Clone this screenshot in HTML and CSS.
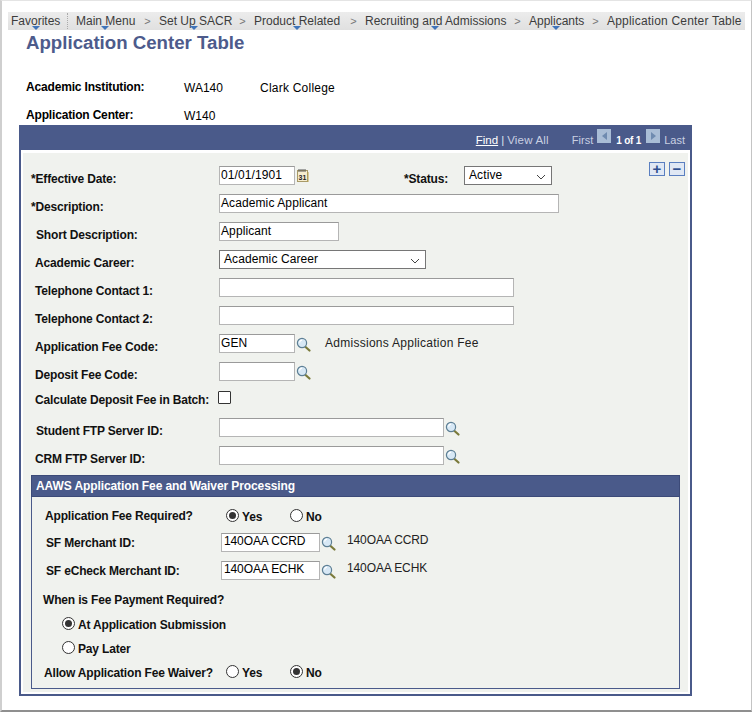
FILE: index.html
```html
<!DOCTYPE html>
<html lang="en">
<head>
<meta charset="utf-8">
<title>Application Center Table</title>
<link rel="stylesheet" href="styles.css">
</head>
<body>
<svg class="defs" width="0" height="0" aria-hidden="true">
  <defs>
    <symbol id="lookup" viewBox="0 0 15 15">
      <path d="M9 9.5 L13.5 13.5" stroke="#7a7a3a" stroke-width="2.2" stroke-linecap="round"/>
      <circle cx="6" cy="6" r="4.6" fill="#d7e8f5" stroke="#5d7f95" stroke-width="1.2"/>
      <path d="M3.5 5.5 A3 3 0 0 1 6 3.2" fill="none" stroke="#fff" stroke-width="1.2"/>
    </symbol>
    <symbol id="chev" viewBox="0 0 12 8">
      <path d="M2 2 L6 6 L10 2" fill="none" stroke="#444" stroke-width="1"/>
    </symbol>
  </defs>
</svg>
<div class="window">
  <nav class="crumbs">
    <span class="crumb fav">Favorites<i class="tri"></i></span>
    <span class="crumb-sep"></span>
    <span class="crumb w-main">Main Menu<i class="tri"></i></span>
    <span class="gt">&gt;</span>
    <span class="crumb w-setup">Set Up SACR<i class="tri"></i></span>
    <span class="gt">&gt;</span>
    <span class="crumb w-prod">Product Related<i class="tri"></i></span>
    <span class="gt">&gt;</span>
    <span class="crumb w-recr">Recruiting and Admissions<i class="tri"></i></span>
    <span class="gt">&gt;</span>
    <span class="crumb w-appl">Applicants<i class="tri"></i></span>
    <span class="gt">&gt;</span>
    <span class="crumb w-last">Application Center Table</span>
  </nav>

  <h1 class="title">Application Center Table</h1>

  <div class="keys">
    <div class="key-row"><span class="key-label">Academic Institution:</span><span class="key-val">WA140</span><span class="key-desc">Clark College</span></div>
    <div class="key-row"><span class="key-label">Application Center:</span><span class="key-val">W140</span></div>
  </div>

  <section class="panel">
    <header class="panel-head">
      <a class="find">Find</a><span class="bar">|</span><span class="nav-txt view-all">View All</span>
      <span class="nav-txt first">First</span>
      <span class="arrow a-prev"><i class="arr-l"></i></span>
      <b class="count">1 of 1</b>
      <span class="arrow a-next"><i class="arr-r"></i></span>
      <span class="nav-txt last">Last</span>
    </header>
    <div class="panel-body">
      <div class="addrem"><span class="sq">+</span><span class="sq">&minus;</span></div>

      <div class="row"><label class="lab req">*Effective Date:</label>
        <span class="in w76">01/01/1901</span>
        <svg class="cal" width="13" height="15" viewBox="0 0 13 15"><rect x="1.5" y="2.5" width="10" height="11" fill="#f6edcf" stroke="#a89a68"/><rect x="11.5" y="4" width="1" height="10" fill="#b9a24f"/><path d="M3 1v3M5 1v3M7 1v3M9 1v3" stroke="#555"/><text x="2.6" y="11.5" class="cal-t">31</text></svg>
        <label class="lab status">*Status:</label>
        <span class="sel w88">Active<svg class="chev"><use href="#chev"/></svg></span>
      </div>
      <div class="row"><label class="lab req">*Description:</label><span class="in w340">Academic Applicant</span></div>
      <div class="row"><label class="lab l5">Short Description:</label><span class="in w120">Applicant</span></div>
      <div class="row"><label class="lab l4">Academic Career:</label><span class="sel w207">Academic Career<svg class="chev"><use href="#chev"/></svg></span></div>
      <div class="row"><label class="lab l4">Telephone Contact 1:</label><span class="in w295"></span></div>
      <div class="row"><label class="lab l4">Telephone Contact 2:</label><span class="in w295"></span></div>
      <div class="row"><label class="lab l4">Application Fee Code:</label><span class="in w76">GEN</span><svg class="lk"><use href="#lookup"/></svg><span class="desc d-fee">Admissions Application Fee</span></div>
      <div class="row"><label class="lab l4">Deposit Fee Code:</label><span class="in w76"></span><svg class="lk"><use href="#lookup"/></svg></div>
      <div class="row"><label class="lab l4 batch">Calculate Deposit Fee in Batch:</label><span class="cb"></span></div>
      <div class="row"><label class="lab l5">Student FTP Server ID:</label><span class="in w225"></span><svg class="lk"><use href="#lookup"/></svg></div>
      <div class="row"><label class="lab l4">CRM FTP Server ID:</label><span class="in w225"></span><svg class="lk"><use href="#lookup"/></svg></div>

      <section class="sub">
        <h2 class="sub-head">AAWS Application Fee and Waiver Processing</h2>
        <div class="sub-body">
          <div class="row sr first-sr"><label class="lab s1">Application Fee Required?</label><span class="rad on"></span><span class="rl w-yes">Yes</span><span class="rad"></span><span class="rl">No</span></div>
          <div class="row sr"><label class="lab s2">SF Merchant ID:</label><span class="in w99">140OAA CCRD</span><svg class="lk"><use href="#lookup"/></svg><span class="desc d-m">140OAA CCRD</span></div>
          <div class="row sr"><label class="lab s2">SF eCheck Merchant ID:</label><span class="in w99">140OAA ECHK</span><svg class="lk"><use href="#lookup"/></svg><span class="desc d-m">140OAA ECHK</span></div>
          <div class="row sr"><label class="lab s3">When is Fee Payment Required?</label></div>
          <div class="row sr short"><span class="rad on ind"></span><span class="rl">At Application Submission</span></div>
          <div class="row sr short"><span class="rad ind"></span><span class="rl">Pay Later</span></div>
          <div class="row sr short"><label class="lab s4">Allow Application Fee Waiver?</label><span class="rad"></span><span class="rl w-yes">Yes</span><span class="rad on"></span><span class="rl">No</span></div>
        </div>
      </section>
    </div>
  </section>
</div>
</body>
</html>
```
FILE: styles.css
```css
* { box-sizing: border-box; }
html, body { margin: 0; padding: 0; background: #fff; }
body {
  width: 753px;
  height: 714px;
  overflow: hidden;
  font-family: "Liberation Sans", Arial, sans-serif;
  font-size: 12px;
  color: #000;
}
.defs { position: absolute; }
.window {
  width: 752px;
  height: 712px;
  background: #fff;
  border-top: 1px solid #e4e4e4;
  border-left: 2px solid #cfcfcf;
  border-right: 1px solid #c4c4c4;
  border-bottom: 2px solid #8f8f8f;
  padding: 11px 0 0 6px;
}

/* breadcrumb */
.crumbs {
  display: flex;
  align-items: center;
  width: 737px;
  height: 18px;
  background: linear-gradient(#ececec, #e0e0e0);
  color: #3c3c3c;
  font-size: 12px;
  padding-left: 3px;
  white-space: nowrap;
}
.crumb { position: relative; line-height: 18px; flex: none; }
.fav { width: 56px; }
.crumb-sep { width: 1px; height: 16px; margin-right: 8px; border-left: 1px dotted #aaa; flex: none; }
.gt { width: 23px; text-align: center; font-size: 11px; color: #777; flex: none; }
.w-main { width: 60px; }
.w-setup { width: 72px; }
.w-prod { width: 88px; }
.w-recr { width: 141px; }
.w-appl { width: 55px; }
.w-last { letter-spacing: 0.2px; }
.tri {
  position: absolute;
  left: 21px;
  bottom: 0;
  width: 0;
  height: 0;
  border-left: 4px solid transparent;
  border-right: 4px solid transparent;
  border-top: 4px solid #3f74ba;
}
.w-main .tri { left: 25px; }
.w-setup .tri { left: 31px; }
.w-prod .tri { left: 39px; }
.w-recr .tri { left: 66px; }
.w-appl .tri { left: 23px; }

.title {
  margin: 2px 0 0 18px;
  font-size: 18.67px;
  line-height: 21px;
  font-weight: bold;
  color: #4d5b8c;
}
.keys { margin: 27px 0 0 18px; }
.key-row { display: flex; height: 28px; align-items: flex-start; }
.key-label { width: 158px; font-weight: bold; line-height: 15px; letter-spacing: -0.17px; }
.key-val { width: 76px; line-height: 17px; }
.key-desc { line-height: 17px; letter-spacing: 0.23px; }

/* panel */
.panel {
  margin: -11px 0 0 11px;
  width: 673px;
  height: 571px;
  border: 2px solid #4a5a8a;
  border-top: 0;
  background: #fff;
}
.panel-head {
  height: 25px;
  margin: 0 -2px;
  background: #4a5a8a;
  display: flex;
  align-items: center;
  justify-content: flex-end;
  padding: 5px 7px 0 0;
  color: #c9d0e2;
  font-size: 11.5px;
}
.find { color: #fff; text-decoration: underline; }
.bar { color: #dfe3ee; margin: 0 3px; }
.view-all { letter-spacing: 0.2px; }
.first { margin-left: 23px; font-size: 11px; }
.last { font-size: 11px; }
.arrow {
  align-self: flex-start;
  width: 14px;
  height: 14px;
  background: #a9bdd6;
  margin-top: -1px;
  display: flex;
  align-items: center;
  justify-content: center;
}
.a-prev { margin-left: 4px; margin-right: 5px; }
.a-next { margin-left: 5px; margin-right: 4px; }
.arr-l { width: 0; height: 0; border-top: 4px solid transparent; border-bottom: 4px solid transparent; border-right: 5px solid #6f8bb0; }
.arr-r { width: 0; height: 0; border-top: 4px solid transparent; border-bottom: 4px solid transparent; border-left: 5px solid #6f8bb0; }
.count { color: #fff; font-size: 10px; width: 25px; white-space: nowrap; letter-spacing: -0.2px; }
.panel-body {
  position: relative;
  margin: 3px 2px 0 2px;
  height: 539px;
  background: #f0f2ee;
  padding: 13px 0 0 8px;
}
.addrem { position: absolute; top: 9px; right: 3px; display: flex; gap: 4px; }
.sq {
  width: 16px;
  height: 14px;
  border: 1px solid #5a7fc0;
  background: #e0e8f4;
  color: #2f4f8f;
  font-weight: bold;
  font-size: 15px;
  line-height: 11px;
  text-align: center;
}

.row { display: flex; align-items: flex-start; height: 28px; white-space: nowrap; }
.lab { width: 188px; font-weight: bold; color: #111; line-height: 15px; letter-spacing: -0.17px; padding-top: 6px; flex: none; }
.l5 { padding-left: 5px; }
.l4 { padding-left: 4px; }
.batch { margin-top: -3px; }
.status { width: 60px; margin-left: 95px; }
.in {
  display: block;
  height: 19px;
  background: #fff;
  border: 1px solid #b5b5b5;
  border-top-color: #9a9a9a;
  padding: 0 1px;
  line-height: 17px;
  letter-spacing: 0.1px;
  flex: none;
}
.w76 { width: 76px; }
.w340 { width: 340px; }
.w120 { width: 120px; }
.w295 { width: 295px; }
.w225 { width: 225px; }
.w99 { width: 99px; }
.sel {
  position: relative;
  display: block;
  height: 19px;
  background: #fff;
  border: 1px solid #767676;
  padding-left: 4px;
  line-height: 17px;
  letter-spacing: 0.1px;
  flex: none;
}
.w88 { width: 88px; }
.w207 { width: 207px; }
.chev { position: absolute; right: 4px; top: 6px; width: 12px; height: 8px; }
.cal { margin: 2px 0 0 1px; flex: none; }
.cal-t { font-size: 7px; font-weight: bold; fill: #222; }
.lk { width: 15px; height: 15px; margin: 3px 0 0 1px; flex: none; }
.desc { line-height: 15px; flex: none; color: #222; }
.d-fee { margin: 2px 0 0 14px; letter-spacing: 0.27px; }
.cb { width: 13px; height: 13px; border: 1px solid #333; background: #fff; border-radius: 1px; margin-left: -1px; margin-top: 1px; flex: none; }

/* sub section */
.sub {
  margin-top: 1px;
  width: 649px;
  height: 214px;
  border: 1px solid #4a5a8a;
  border-top: 0;
}
.sub-head {
  margin: 0 -1px;
  height: 22px;
  background: #4a5a8a;
  border: 1px solid #3c4a78;
  color: #fff;
  font-size: 12px;
  letter-spacing: -0.1px;
  line-height: 20px;
  padding-left: 4px;
}
.sub-body { padding-top: 12px; }
.sr .lab { padding-top: 0; }
.first-sr { height: 24px; }
.short { height: 24px; }
.s1 { width: 194px; padding-left: 13px; }
.s2 { width: 189px; padding-left: 14px; margin-top: 3px; }
.s3 { width: 300px; padding-left: 11px; margin-top: 4px; }
.s4 { width: 194px; padding-left: 12px; margin-top: 1px; }
.sr .in { padding: 0 2px; line-height: 15px; letter-spacing: -0.12px; }
.sr .lk { margin-top: 3px; margin-left: 1px; }
.d-m { margin-left: 11px; letter-spacing: -0.12px; }
.rad {
  display: block;
  flex: none;
  position: relative;
  width: 13px;
  height: 13px;
  border: 1px solid #333;
  border-radius: 50%;
  background: #fff;
}
.rad.on::after {
  content: "";
  position: absolute;
  left: 2px;
  top: 2px;
  width: 7px;
  height: 7px;
  border-radius: 50%;
  background: #333;
}
.rl { font-weight: bold; color: #111; letter-spacing: -0.17px; margin-left: 3px; margin-top: 1px; line-height: 15px; flex: none; }
.w-yes { width: 48px; }
.ind { margin-left: 30px; }
```
